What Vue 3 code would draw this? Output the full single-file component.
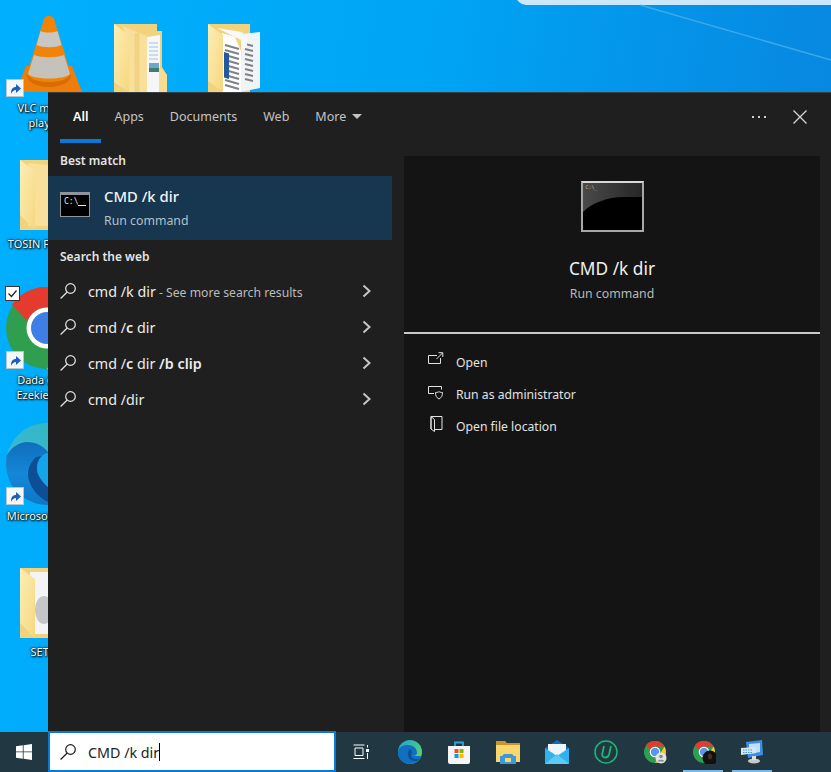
<template>
  <div class="screen">
    <svg class="defs" width="0" height="0">
      <defs>
        <linearGradient id="leaf" x1="0" y1="0" x2="1" y2="1">
          <stop offset="0" stop-color="#fdeeb5" />
          <stop offset="1" stop-color="#f6d77f" />
        </linearGradient>
        <symbol id="shortcut" viewBox="0 0 18 18">
          <rect x="0.5" y="0.5" width="17" height="17" fill="#f4f6f8" stroke="#b9c4cc" />
          <path d="M5 15c0-5 1.500-7 5-7V5l5 4.500-5 4.500v-3c-2 0-3.500 1-5 4z" fill="#1b5fc4" />
        </symbol>
      </defs>
    </svg>

    <main class="desktop">
      <div class="wallpaper-glow"></div>
      <svg class="ray" viewBox="0 0 831 92" width="831" height="92">
        <path d="M640 5L831 60" stroke="#4fb4f0" stroke-width="1.500" fill="none" opacity="0.7" />
      </svg>

      <!-- desktop icons sit on a free canvas -->
      <div class="icon vlc">
        <svg class="glyph" viewBox="0 0 66 80" width="66" height="80">
          <path d="M10 50L0 76h66L56 50z" fill="#ee7d0a" />
          <path d="M33 0c-4 0-5 2-6 6L11 58c-1 8 10 13 22 13s23-5 22-13L39 6c-1-4-2-6-6-6z" fill="#f08409" />
          <path d="M24.500 15c5 2 12 2 17 0l4 14c-7 3-18 3-25 0z" fill="#c9c7c2" />
          <path d="M18 39c8 3 22 3 30 0l6 19c-5 6-37 6-42 0z" fill="#c5c2bc" />
          <path d="M11 58c-1 8 10 13 22 13s23-5 22-13c-4 6-12 8-22 8s-18-2-22-8z" fill="#d96c05" />
        </svg>
        <svg class="arrow" width="18" height="18"><use href="#shortcut" /></svg>
        <span class="label">VLC media<br />player</span>
      </div>

      <svg class="folder folder-a" viewBox="0 0 54 68" width="54" height="68">
        <path d="M1 0h43v7h5v36l5 8v17H1z" fill="#f3d27c" />
        <path d="M34 13l13-2v57H34z" fill="#f4f6f8" />
        <path d="M36 19h9M36 23h9M36 27h9M36 31h9M36 35h9" stroke="#9cc4e4" stroke-width="1" />
        <path d="M36 39h10v5H36z" fill="#6fa6cf" />
        <path d="M36 44h10v4H36z" fill="#3f7d70" />
        <path d="M46 43l8 8v17h-8z" fill="#f8dc90" />
        <path d="M9 2l25 10v56H16V14z" fill="#f9e09a" />
        <path d="M24 9v59" stroke="#f2d386" stroke-width="5" />
        <path d="M1 0l15 11v57L1 58z" fill="url(#leaf)" />
      </svg>

      <svg class="folder folder-b" viewBox="0 0 54 68" width="54" height="68">
        <path d="M0 0h42v68H0z" fill="#f3d27c" />
        <path d="M34 10l18-2v56l-20 4z" fill="#f1f4f7" />
        <path d="M37 20l8 2M37 25l8 2M37 30l8 2M37 35l8 2M37 40l8 2M37 45l8 2M37 50l8 2M37 55l8 2" stroke="#7f8388" stroke-width="2" />
        <path d="M9 4l25 4 5 8v6l-6 4V16z" fill="#f8f9fa" />
        <path d="M14 9l13 4 6 14v41H14z" fill="#fff" />
        <path d="M17 21l14 4M17 26l14 4M17 31l14 4M17 36l14 4M17 41l14 4M17 46l14 4M17 51l14 4M17 56l14 4M17 61l14 4" stroke="#7f8388" stroke-width="2.200" />
        <path d="M16 28l5 1.500V55l-5-1.500z" fill="#23599f" />
        <path d="M0 0l15 11v57L0 57z" fill="url(#leaf)" />
      </svg>

      <div class="icon tosin">
        <svg class="glyph" viewBox="0 0 40 70" width="40" height="70">
          <path d="M0 0h40v70H0z" fill="#f3d27c" />
          <path d="M8 3l32 3v60H8z" fill="#f9e09a" />
          <path d="M0 0l15 11v59L0 55z" fill="url(#leaf)" />
        </svg>
        <span class="label">TOSIN FOLDER</span>
      </div>

      <div class="icon chrome">
        <svg class="glyph" viewBox="0 0 82 82" width="82" height="82">
          <circle cx="41" cy="41" r="41" fill="#2f9e4f" />
          <path d="M41 0a41 41 0 0 1 35.500 20.500H41a20.500 20.500 0 0 0-19.500 14L6 18A41 41 0 0 1 41 0z" fill="#e53a2e" />
          <path d="M76.500 20.500A41 41 0 0 1 41 82l18-31 17.500-30.500z" fill="#fcc934" />
          <circle cx="41" cy="41" r="20.500" fill="#fff" />
          <circle cx="41" cy="41" r="16" fill="#3d7fe6" />
        </svg>
        <span class="check">
          <svg viewBox="0 0 13 13" width="13" height="13"><path d="M2.500 6.500l3 3 5-6" fill="none" stroke="#222" stroke-width="1.200" /></svg>
        </span>
        <svg class="arrow" width="18" height="18"><use href="#shortcut" /></svg>
        <span class="label">Dada (Dada)<br />Ezekiel Dada</span>
      </div>

      <div class="icon edge">
        <svg class="glyph" viewBox="0 0 82 82" width="82" height="82">
          <defs>
            <linearGradient id="edgeTeal" x1="0" y1="1" x2="1" y2="0">
              <stop offset="0" stop-color="#3fb6e4" />
              <stop offset="1" stop-color="#2fb8b8" />
            </linearGradient>
            <linearGradient id="edgeBody" x1="0" y1="0" x2="0" y2="1">
              <stop offset="0" stop-color="#0f6ebd" />
              <stop offset="0.5" stop-color="#1487d6" />
              <stop offset="1" stop-color="#0f76c6" />
            </linearGradient>
          </defs>
          <circle cx="41" cy="41" r="41" fill="url(#edgeTeal)" />
          <path d="M0.500 33C5 24 14 19 21 19c9 0 16 4 21 10v53C18 82 0 64 0 41z" fill="url(#edgeBody)" />
          <path d="M30 34C24 40 22 46 22 52c1 12 10 22 20 27V64C36 59 31 52 31 46c0-5 1-9 5-13z" fill="#0c4f97" />
          <path d="M36 33c-4 4-5 8-5 13 0 5 5 13 11 18V30c-2 0-4 1-6 3z" fill="#12a5ea" />
        </svg>
        <svg class="arrow" width="18" height="18"><use href="#shortcut" /></svg>
        <span class="label">Microsoft Edge</span>
      </div>

      <div class="icon setup">
        <svg class="glyph" viewBox="0 0 40 70" width="40" height="70">
          <path d="M0 0h40v70H0z" fill="#f3d27c" />
          <path d="M10 4h30v62H10z" fill="#f3f4f5" />
          <ellipse cx="24" cy="42" rx="9" ry="14" fill="#c4c6c8" />
          <path d="M0 0l15 11v59L0 55z" fill="url(#leaf)" />
        </svg>
        <span class="label">SETUP</span>
      </div>

      <section class="panel">
        <header class="panel-head">
          <nav class="tabs">
            <span v-for="tab in tabs" :key="tab" class="tab" :class="{ active: tab === 'All' }">{{ tab }}</span>
            <span class="tab more">More <i class="caret"></i></span>
          </nav>
          <div class="head-tools">
            <span class="dots"><i></i><i></i><i></i></span>
            <svg viewBox="0 0 14 14" width="14" height="14">
              <path d="M.5.5l13 13M13.500.5l-13 13" stroke="#d6d6d6" stroke-width="1.300" fill="none" />
            </svg>
          </div>
        </header>

        <div class="panel-body">
          <div class="results">
            <h3 class="group">Best match</h3>
            <div class="best">
              <span class="cmd-small">
                <span class="prompt">C:\</span><span class="under"></span>
              </span>
              <div class="best-text">
                <strong>CMD /k dir</strong>
                <span>Run command</span>
              </div>
            </div>
            <h3 class="group web">Search the web</h3>
            <div v-for="row in suggestions" :key="row.id" class="row">
              <svg class="lens" viewBox="0 0 16 16" width="16" height="16">
                <circle cx="10.500" cy="5.500" r="4.800" />
                <path d="M7 9.200L.6 15.500" />
              </svg>
              <span class="row-text">
                <span v-for="part in row.parts" :key="part.t" :class="{ b: part.b, hint: part.hint }">{{ part.t }}</span>
              </span>
              <svg class="chev" viewBox="0 0 10 14" width="10" height="14">
                <path d="M1.500 1.500L7.500 7l-6 5.500" />
              </svg>
            </div>
          </div>

          <aside class="detail">
            <div class="detail-top">
              <div class="cmd-large">
                <svg viewBox="0 0 59 47" width="59" height="47">
                  <defs>
                    <linearGradient id="sheen" x1="0" y1="0" x2="1" y2="0">
                      <stop offset="0" stop-color="#4a4a4a" />
                      <stop offset="1" stop-color="#262626" />
                    </linearGradient>
                  </defs>
                  <path d="M0 0h59v14H42C24 14 9 20 0 29z" fill="url(#sheen)" />
                </svg>
                <span class="dots-tiny">C:\_</span>
              </div>
              <h2>CMD /k dir</h2>
              <span>Run command</span>
            </div>
            <ul class="actions">
              <li>
                <svg viewBox="0 0 16 16" width="16" height="16">
                  <path d="M9 3.500H.5v8h12V6M8.500 7L14.500 1M10.500.7h4.300V5" />
                </svg>
                Open
              </li>
              <li>
                <svg viewBox="0 0 16 16" width="16" height="16">
                  <path d="M6 9.500H.5v-7h13v3M7.500 8.500c2 0 3-.5 3.500-1 .5.500 1.500 1 3.500 1 0 3.500-1 5-3.500 6.500-2.500-1.500-3.500-3-3.500-6.500z" />
                </svg>
                Run as administrator
              </li>
              <li>
                <svg viewBox="0 0 16 16" width="16" height="16">
                  <path d="M3 .5h11v13H6.500M3 .5l3.500 3v12L3 13zM3 .5V13" />
                </svg>
                Open file location
              </li>
            </ul>
          </aside>
        </div>
      </section>
    </main>

    <footer class="taskbar">
      <div class="start">
        <svg viewBox="0 0 16 16" width="16" height="16">
          <path d="M0 2.300l6.800-1v6.200H0zM7.600 1.200L16 0v7.500H7.600zM0 8.300h6.800v6.400L0 13.700zM7.600 8.300H16V16l-8.400-1.200z" fill="#fff" />
        </svg>
      </div>
      <div class="searchbox">
        <svg class="lens dark" viewBox="0 0 16 16" width="16" height="16">
          <circle cx="10.500" cy="5.500" r="4.800" />
          <path d="M7 9.200L.6 15.500" />
        </svg>
        <span class="typed">CMD /k dir</span><i class="cursor"></i>
      </div>
      <div class="task task-view">
        <svg viewBox="0 0 16 16" width="16" height="16">
          <path d="M.5 1h11M.5 14.500h11M2 4h8v7.500H2zM14.500 1v2.500M14.500 9v6" fill="none" stroke="#fff" stroke-width="1" />
          <rect x="13" y="5" width="3" height="3" fill="#fff" />
        </svg>
      </div>
      <div class="task">
        <svg viewBox="0 0 24 24" width="24" height="24">
          <defs>
            <linearGradient id="edgeTop" x1="0" y1="0" x2="1" y2="0.700">
              <stop offset="0" stop-color="#1ba1d8" />
              <stop offset="1" stop-color="#5fd36a" />
            </linearGradient>
          </defs>
          <circle cx="12" cy="12" r="12" fill="url(#edgeTop)" />
          <path d="M0 12C1 6 6 5 10 5c5 0 9 3 9 8 0 2-2 3-5 3h9c-1 5-6 8-11 8C5 24 0 19 0 12z" fill="#0f6fc0" />
          <path d="M12 9c-3 2-3 8 1 11 4 2 7 1 9-1-4 1-9 0-9-4 0-2 1-2 1-2 0-2-1-3-2-4z" fill="#0c4f97" />
        </svg>
      </div>
      <div class="task">
        <svg viewBox="0 0 24 24" width="24" height="24">
          <path d="M8 6V2.500h8V6" fill="none" stroke="#2aa6ea" stroke-width="1.800" />
          <path d="M1 6h22v16a2 2 0 0 1-2 2H3a2 2 0 0 1-2-2z" fill="#f5f5f5" />
          <rect x="7.500" y="9" width="4" height="4" fill="#f25022" />
          <rect x="12.500" y="9" width="4" height="4" fill="#7fba00" />
          <rect x="7.500" y="14" width="4" height="4" fill="#00a4ef" />
          <rect x="12.500" y="14" width="4" height="4" fill="#ffb900" />
        </svg>
      </div>
      <div class="task">
        <svg viewBox="0 0 24 24" width="24" height="24">
          <path d="M0 1h9l2 2h13v19H0z" fill="#c9952f" />
          <path d="M0 5h24v17H0z" fill="#fbd66c" />
          <path d="M4 16h2l2-2h8l2 2h2v8H4z" fill="#3f98d8" />
          <rect x="9" y="18" width="6" height="4" fill="#fbd66c" />
        </svg>
      </div>
      <div class="task">
        <svg viewBox="0 0 24 24" width="24" height="24">
          <path d="M0 8L12 0l12 8v16H0z" fill="#0f6cc0" />
          <path d="M3 4h18v11H3z" fill="#eef6fc" />
          <path d="M0 8l12 8 12-8v16H0z" fill="#2fb2ee" />
          <path d="M0 24l12-10 12 10z" fill="#5ccaf5" />
        </svg>
      </div>
      <div class="task">
        <svg viewBox="0 0 24 24" width="24" height="24">
          <circle cx="12" cy="12" r="11" fill="none" stroke="#22b573" stroke-width="1.500" />
          <path d="M10 6l-1.800 8c-.4 2 .8 3.500 3 3.500s3.500-1.500 4-3.500L17 6" fill="none" stroke="#22b573" stroke-width="1.800" />
        </svg>
      </div>
      <div class="task">
        <svg viewBox="0 0 24 24" width="24" height="24">
          <circle cx="12" cy="12" r="11" fill="#2f9e4f" />
          <path d="M12 1a11 11 0 0 1 9.500 5.500H12A5.500 5.500 0 0 0 6.800 10L3 5a11 11 0 0 1 9-4z" fill="#e53a2e" />
          <path d="M21.500 6.500A11 11 0 0 1 12 23l5-9z" fill="#fcc934" />
          <circle cx="12" cy="12" r="5.300" fill="#fff" />
          <circle cx="12" cy="12" r="4.200" fill="#5b95ee" />
          <circle cx="18" cy="18" r="5.500" fill="#e3e3e3" />
          <circle cx="18" cy="16.500" r="1.800" fill="#8a8a8a" />
          <path d="M14.500 21.500c.5-2.500 6.500-2.500 7 0z" fill="#8a8a8a" />
        </svg>
      </div>
      <div class="task on">
        <svg viewBox="0 0 24 24" width="24" height="24">
          <circle cx="12" cy="12" r="11" fill="#2f9e4f" />
          <path d="M12 1a11 11 0 0 1 9.500 5.500H12A5.500 5.500 0 0 0 6.800 10L3 5a11 11 0 0 1 9-4z" fill="#e53a2e" />
          <path d="M21.500 6.500A11 11 0 0 1 12 23l5-9z" fill="#fcc934" />
          <circle cx="12" cy="12" r="5.300" fill="#fff" />
          <circle cx="12" cy="12" r="4.200" fill="#5b95ee" />
          <circle cx="18" cy="18" r="7.500" fill="#111" />
          <ellipse cx="18" cy="16.500" rx="2" ry="3" fill="#4a2c22" />
        </svg>
      </div>
      <div class="task on">
        <svg viewBox="0 0 24 24" width="24" height="24">
          <path d="M6 2l16-2 1 15-15 3z" fill="#3c8fe0" />
          <path d="M9 4l11-1v9l-11 2z" fill="#bfe0f8" />
          <path d="M1 8l15-1v6L1 15z" fill="#d5e6f3" />
          <path d="M3 10h10M3 12.500h10" stroke="#4f92c9" stroke-width="1" stroke-dasharray="1.500 1" />
          <ellipse cx="14" cy="21" rx="6" ry="2.600" fill="#c9c9c9" />
          <path d="M12 16h4v4h-4z" fill="#dcdcdc" />
        </svg>
      </div>
    </footer>
  </div>
</template>

<script setup>
const tabs = ['All', 'Apps', 'Documents', 'Web']

const suggestions = [
  { id: 1, parts: [{ t: 'cmd /k dir' }, { t: ' - See more search results', hint: true }] },
  { id: 2, parts: [{ t: 'cmd /' }, { t: 'c', b: true }, { t: ' dir' }] },
  { id: 3, parts: [{ t: 'cmd /' }, { t: 'c', b: true }, { t: ' dir ' }, { t: '/b clip', b: true }] },
  { id: 4, parts: [{ t: 'cmd /dir' }] }
]
</script>

<style>
html,
body {
  margin: 0;
  background: #00a8f5;
}
</style>

<style scoped>
.screen {
  display: flex;
  flex-direction: column;
  width: 831px;
  height: 772px;
  overflow: hidden;
  font-family: "Noto Sans", "Open Sans", sans-serif;
}

.defs {
  position: absolute;
}

.desktop {
  position: relative;
  flex: 1;
  background: linear-gradient(100deg, #00b0ff 0%, #00a5f5 45%, #0590e6 75%, #0a80dc 100%);
}

.wallpaper-glow {
  position: absolute;
  top: -8px;
  right: 0;
  width: 315px;
  height: 13px;
  background: #cbe7fb;
  border-bottom-left-radius: 10px;
}

.ray {
  position: absolute;
  top: 0;
  left: 0;
}

.icon {
  position: absolute;
}

.icon .glyph {
  display: block;
}

.arrow {
  position: absolute;
}

.label {
  position: absolute;
  left: 0;
  width: 84px;
  color: #fff;
  font-size: 11px;
  line-height: 15px;
  text-align: center;
  white-space: nowrap;
  text-shadow: 0 0 3px #000, 1px 1px 2px #000, 0 0 1px #000;
}

.vlc {
  left: 16px;
  top: 16px;
}

.vlc .arrow {
  left: -10px;
  top: 63px;
}

.vlc .label {
  left: -13.500px;
  top: 84px;
}

.folder {
  position: absolute;
  top: 24px;
}

.folder-a {
  left: 113px;
}

.folder-b {
  left: 208px;
}

.tosin {
  left: 20px;
  top: 160px;
}

.tosin .label {
  left: -16px;
  top: 76px;
}

.chrome {
  left: 6px;
  top: 287px;
}

.chrome .arrow {
  left: 0;
  top: 64px;
}

.chrome .label {
  left: 1px;
  top: 85px;
}

.check {
  position: absolute;
  left: 0;
  top: 0;
  display: flex;
  width: 13px;
  height: 13px;
  background: #fff;
  outline: 1px solid #333;
}

.edge {
  left: 6px;
  top: 423px;
}

.edge .arrow {
  left: 0;
  top: 64px;
}

.edge .label {
  left: -2.500px;
  top: 85px;
}

.setup {
  left: 20px;
  top: 568px;
}

.setup .label {
  left: -15px;
  top: 76px;
}

.panel {
  position: absolute;
  left: 48px;
  right: 0;
  top: 92px;
  bottom: 0;
  display: flex;
  flex-direction: column;
  background: #1f1f1f;
  border-top: 1px solid #3a3f42;
  box-sizing: border-box;
}

.panel-head {
  display: flex;
  align-items: flex-start;
  justify-content: space-between;
  height: 51px;
  padding: 0 24px 0 12px;
}

.tabs {
  display: flex;
}

.tab {
  display: flex;
  align-items: center;
  height: 46px;
  padding: 0 13px;
  color: #c4c4c4;
  font-size: 12.500px;
  border-bottom: 4px solid transparent;
}

.tab.active {
  color: #fff;
  font-weight: 600;
  border-bottom-color: #0a78d7;
}

.caret {
  display: inline-block;
  width: 0;
  height: 0;
  margin-left: 6px;
  border-left: 5px solid transparent;
  border-right: 5px solid transparent;
  border-top: 5px solid #c4c4c4;
}

.head-tools {
  display: flex;
  align-items: center;
  gap: 27px;
  height: 48px;
}

.dots {
  display: flex;
  gap: 4px;
}

.dots i {
  width: 2px;
  height: 2px;
  background: #d0d0d0;
}

.panel-body {
  display: flex;
  flex: 1;
  min-height: 0;
}

.results {
  width: 344px;
}

.group {
  display: flex;
  align-items: center;
  height: 32px;
  margin: 0;
  padding-left: 12px;
  color: #e4e4e4;
  font-size: 12px;
  font-weight: 600;
}

.group.web {
  margin-bottom: 1px;
}

.best {
  display: flex;
  align-items: center;
  gap: 14px;
  height: 64px;
  padding-left: 12px;
  background: #17364f;
}

.cmd-small {
  position: relative;
  display: block;
  flex: none;
  box-sizing: border-box;
  width: 30px;
  height: 25px;
  margin-top: -8px;
  background: #000;
  border: 1px solid #8f959a;
  border-top: 3px solid #8f959a;
}

.prompt {
  position: absolute;
  left: 3px;
  top: 2px;
  color: #e6e6e6;
  font: 8px/10px "DejaVu Sans Mono", monospace;
}

.under {
  position: absolute;
  left: 17px;
  right: 3px;
  top: 10px;
  height: 1px;
  background: #e6e6e6;
}

.best-text {
  display: flex;
  flex-direction: column;
  gap: 6px;
  margin-top: -1px;
}

.best-text strong {
  color: #f4f4f4;
  font-size: 14.800px;
  font-weight: 500;
  line-height: 20px;
}

.best-text span {
  color: #b5c0c9;
  font-size: 12.300px;
  line-height: 18px;
}

.row {
  display: flex;
  align-items: center;
  height: 36px;
  padding: 0 20px 0 12px;
}

.lens {
  flex: none;
  fill: none;
  stroke: #e6e6e6;
  stroke-width: 1.200;
}

.lens.dark {
  stroke: #1a1a1a;
}

.row-text {
  flex: 1;
  margin-left: 12px;
  color: #ececec;
  font-size: 14.300px;
  white-space: pre;
}

.row-text .b {
  font-weight: 600;
}

.row-text .hint {
  color: #bcbcbc;
  font-size: 12.200px;
}

.chev {
  fill: none;
  stroke: #c6c6c6;
  stroke-width: 2;
}

.detail {
  display: flex;
  flex-direction: column;
  width: 416px;
  margin: 12px 0 0 12px;
  background: #141414;
}

.detail-top {
  display: flex;
  flex-direction: column;
  align-items: center;
  height: 178px;
  box-sizing: border-box;
  padding-top: 25px;
  border-bottom: 2px solid #c8c8c8;
  color: #b9b9b9;
  font-size: 12.300px;
}

.cmd-large {
  position: relative;
  width: 59px;
  height: 47px;
  background: #000;
  border: 2px solid #a8a8a8;
  border-top-color: #d8d8d8;
}

.cmd-large svg {
  display: block;
}

.dots-tiny {
  position: absolute;
  left: 3px;
  top: 1px;
  color: #bdbdbd;
  font: 5px/6px "DejaVu Sans Mono", monospace;
}

.detail-top h2 {
  margin: 26px 0 5px;
  color: #f0f0f0;
  font-size: 17.300px;
  font-weight: 400;
  line-height: 22px;
}

.actions {
  margin: 0;
  padding: 12px 0 0 24px;
  list-style: none;
  color: #e2e2e2;
  font-size: 12.200px;
}

.actions li {
  display: flex;
  align-items: center;
  gap: 12px;
  height: 32px;
}

.actions svg {
  flex: none;
  margin-top: -4px;
  fill: none;
  stroke: #e2e2e2;
  stroke-width: 1;
}

.taskbar {
  position: relative;
  z-index: 2;
  display: flex;
  flex: none;
  height: 40px;
  background: #213843;
}

.start {
  display: flex;
  align-items: center;
  justify-content: center;
  width: 48px;
}

.searchbox {
  display: flex;
  align-items: center;
  box-sizing: border-box;
  width: 288px;
  margin-top: -1px;
  height: 41px;
  padding: 1px 0 0 10px;
  background: #fff;
  border: 2px solid #0a78d7;
}

.typed {
  margin-left: 12px;
  color: #222;
  font-size: 14.300px;
}

.cursor {
  width: 1px;
  height: 18px;
  margin-left: 0;
  background: #000;
}

.task {
  position: relative;
  display: flex;
  align-items: center;
  justify-content: center;
  width: 48.860px;
}

.task-view {
  width: 50px;
}

.task.on::after {
  content: "";
  position: absolute;
  left: 4px;
  right: 5px;
  bottom: 0;
  height: 2px;
  background: #76b9ed;
}
</style>
